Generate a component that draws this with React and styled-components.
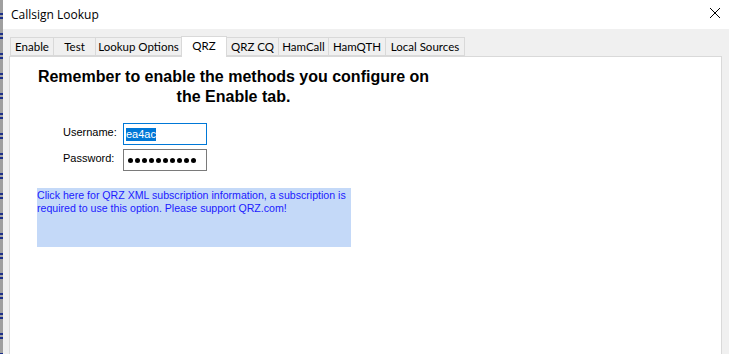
import React from 'react'
import styled, { createGlobalStyle } from 'styled-components'

const Global = createGlobalStyle`
  html, body {
    margin: 0;
    padding: 0;
    background: #f0f0f0;
    overflow: hidden;
  }
`

const Screen = styled.div`
  display: flex;
  width: 729px;
  height: 354px;
  overflow: hidden;
`

const BehindEdge = styled.div`
  width: 3px;
  flex-shrink: 0;
  background-color: #a0a0a0;
  background-image: repeating-linear-gradient(
    to bottom,
    transparent 0,
    transparent 13px,
    #1b2f8a 13px,
    #1b2f8a 15px,
    transparent 15px,
    transparent 17px,
    #1b2f8a 17px,
    #1b2f8a 19px,
    transparent 19px,
    transparent 20px
  );
`

const Window = styled.div`
  flex: 1;
  display: flex;
  flex-direction: column;
  background: #f0f0f0;
`

const TitleBar = styled.div`
  height: 29px;
  background: #fff;
  display: flex;
  align-items: center;
  justify-content: space-between;
  padding: 0 7px 0 8px;
  font-family: 'Open Sans', 'Noto Sans', sans-serif;
  font-size: 12px;
  color: #000;
`

const CloseBtn = styled.div`
  width: 14px;
  height: 14px;
  display: flex;
  align-items: center;
  justify-content: center;
  margin-top: -3px;
`

const Body = styled.div`
  flex: 1;
  display: flex;
  flex-direction: column;
  padding: 7px 7px 0 6px;
`

const TabStrip = styled.div`
  display: flex;
  align-items: flex-end;
  height: 20px;
  padding-left: 2px;
  position: relative;
  z-index: 1;
`

const Tab = styled.div`
  box-sizing: border-box;
  width: ${p => p.$w}px;
  height: ${p => (p.$active ? '21px' : '19px')};
  margin-bottom: ${p => (p.$active ? '-1px' : '0')};
  border: 1px solid #d9d9d9;
  border-bottom: ${p => (p.$active ? 'none' : '1px solid #d9d9d9')};
  margin-left: -1px;
  background: ${p => (p.$active ? '#fff' : '#f0f0f0')};
  font-family: Lato, 'Open Sans', sans-serif;
  font-size: 11.5px;
  text-align: center;
  line-height: 17px;
  color: #000;
  white-space: nowrap;
`

const Page = styled.div`
  flex: 1;
  background: #fff;
  border: 1px solid #d9d9d9;
  border-bottom: none;
  padding: 10px 0 0 27px;
`

const Heading = styled.div`
  width: 393px;
  text-align: center;
  font-family: 'Liberation Sans', Arial, sans-serif;
  font-weight: bold;
  font-size: 16px;
  line-height: 20px;
  color: #000;
`

const Form = styled.div`
  display: grid;
  grid-template-columns: 60px 84px;
  row-gap: 4px;
  margin: 16px 0 0 26px;
  align-items: center;
`

const Label = styled.div`
  font-family: 'Liberation Sans', Arial, sans-serif;
  font-size: 11px;
  color: #000;
  margin-top: -4px;
`

const Field = styled.div`
  box-sizing: border-box;
  height: 22px;
  border: 1px solid ${p => (p.$focus ? '#0078d7' : '#7a7a7a')};
  background: #fff;
  padding: 2px 2px;
  display: flex;
  align-items: center;
  gap: 2px;
  font-family: 'Liberation Sans', Arial, sans-serif;
  font-size: 11px;
`

const Selected = styled.span`
  background: #0078d7;
  color: #fff;
  padding: 0 0 1px;
`

const Dot = styled.span`
  width: 5px;
  height: 5px;
  border-radius: 50%;
  background: #000;
  flex-shrink: 0;
  &:first-child {
    margin-left: 2px;
  }
`

const InfoBox = styled.div`
  width: 314px;
  height: 59px;
  margin-top: 17px;
  background: #c4d9f8;
  color: #1b1bff;
  font-family: 'Liberation Sans', Arial, sans-serif;
  font-size: 10.6px;
  line-height: 13px;
  padding: 1px 0 0 0;
  box-sizing: border-box;
  cursor: pointer;
`

const tabs = [
  { name: 'Enable', w: 44 },
  { name: 'Test', w: 43 },
  { name: 'Lookup Options', w: 87 },
  { name: 'QRZ', w: 46, active: true },
  { name: 'QRZ CQ', w: 53 },
  { name: 'HamCall', w: 51 },
  { name: 'HamQTH', w: 58 },
  { name: 'Local Sources', w: 80 },
]

export default function App() {
  return (
    <>
      <Global />
      <Screen>
        <BehindEdge />
        <Window>
          <TitleBar>
            <span>Callsign Lookup</span>
            <CloseBtn>
              <svg width="12" height="12" viewBox="0 0 12 12">
                <path d="M1 1 L11 11 M11 1 L1 11" stroke="#000" strokeWidth="1" />
              </svg>
            </CloseBtn>
          </TitleBar>
          <Body>
            <TabStrip>
              {tabs.map(t => (
                <Tab key={t.name} $active={t.active} $w={t.w}>{t.name}</Tab>
              ))}
            </TabStrip>
            <Page>
              <Heading>
                Remember to enable the methods you configure on the Enable tab.
              </Heading>
              <Form>
                <Label>Username:</Label>
                <Field $focus><Selected>ea4ac</Selected></Field>
                <Label>Password:</Label>
                <Field>
                  {Array.from({ length: 10 }, (_, i) => <Dot key={i} />)}
                </Field>
              </Form>
              <InfoBox>
                Click here for QRZ XML subscription information, a subscription is required to use this option. Please support QRZ.com!
              </InfoBox>
            </Page>
          </Body>
        </Window>
      </Screen>
    </>
  )
}
